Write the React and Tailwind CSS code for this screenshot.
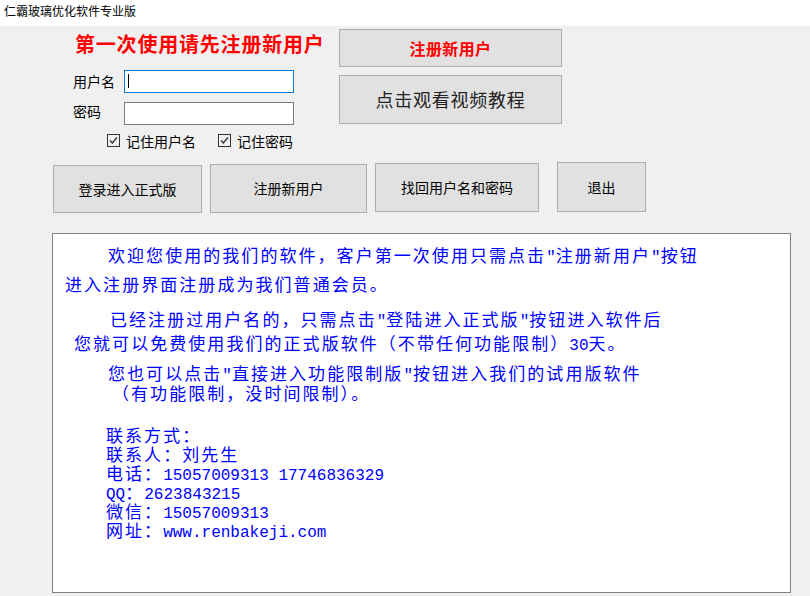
import React from "react";

const L = ({ children }) => (
  <span className="font-['Liberation_Mono',monospace] text-[16px] tracking-normal">{children}</span>
);
const Q = () => <L>{'"'}</L>;

const Check = () => (
  <svg width="13" height="13" viewBox="0 0 13 13" className="shrink-0">
    <rect x="0.5" y="0.5" width="12" height="12" fill="none" stroke="#333" strokeWidth="1" />
    <path d="M3 6.5 L5.3 9 L10 3.5" fill="none" stroke="#333" strokeWidth="1.3" />
  </svg>
);

const Btn = ({ className, children }) => (
  <div
    className={
      "flex items-center justify-center bg-[#e1e1e1] border border-[#adadad] text-[14px] text-black " +
      className
    }
  >
    {children}
  </div>
);

export default function App() {
  return (
    <div className="w-[810px] h-[596px] overflow-hidden bg-[#f0f0f0] font-['Noto_Sans_CJK_SC',sans-serif]">
      {/* title bar */}
      <div className="h-[26px] bg-white pl-[4px] pt-[3px] text-[12px] leading-[16px] text-black">
        仁霸玻璃优化软件专业版
      </div>

      {/* upper section */}
      <div className="h-[136px] flex pl-[73px]">
        <div className="w-[266px] flex flex-col">
          <div className="mt-[6px] ml-[2px] h-[24px] leading-[24px] text-[20px] font-bold text-[#ff0000] tracking-[0.8px] whitespace-nowrap">
            第一次使用请先注册新用户
          </div>
          <div className="mt-[14px] flex items-center h-[23px]">
            <div className="w-[51px] text-[14px] leading-[18px] text-black mb-[1px]">用户名</div>
            <div className="w-[170px] h-[23px] bg-white border border-[#0078d7] pl-[3px] pt-[3px]">
              <div className="w-px h-[14px] bg-black"></div>
            </div>
          </div>
          <div className="mt-[9px] flex items-center h-[23px]">
            <div className="w-[51px] text-[14px] leading-[18px] text-black mb-[6px]">密码</div>
            <div className="w-[170px] h-[23px] bg-white border border-[#7a7a7a]"></div>
          </div>
          <div className="mt-[9px] flex items-center h-[13px] pl-[34px] text-[14px] leading-[18px] text-black whitespace-nowrap">
            <div className="w-[111px] flex items-center gap-[6px]">
              <Check />
              <span>记住用户名</span>
            </div>
            <div className="flex items-center gap-[6px]">
              <Check />
              <span>记住密码</span>
            </div>
          </div>
        </div>
        <div className="flex flex-col">
          <Btn className="mt-[3px] w-[223px] h-[38px]">
            <span className="text-[16px] font-bold text-[#ff0000] tracking-[0.4px]">注册新用户</span>
          </Btn>
          <Btn className="mt-[8px] w-[223px] h-[49px]">
            <span className="text-[18px] text-[#222] tracking-[0.75px]">点击观看视频教程</span>
          </Btn>
        </div>
      </div>

      {/* bottom buttons row */}
      <div className="h-[71px] flex items-start pl-[53px]">
        <Btn className="mt-[3px] w-[149px] h-[48px]">登录进入正式版</Btn>
        <Btn className="ml-[8px] mt-[2px] w-[157px] h-[49px]">注册新用户</Btn>
        <Btn className="ml-[8px] mt-[1px] w-[164px] h-[49px]">找回用户名和密码</Btn>
        <Btn className="ml-[18px] w-[89px] h-[50px]">退出</Btn>
      </div>

      {/* text box */}
      <div className="ml-[52px] w-[739px] h-[360px] bg-white border border-[#828282] text-[#0000ff] text-[17px] tracking-[2.05px] whitespace-nowrap">
        <div className="mt-[11px] h-[19px] leading-[19px] pl-[55px]">
          欢迎您使用的我们的软件，客户第一次使用只需点击<Q />注册新用户<Q />按钮
        </div>
        <div className="mt-[10px] h-[19px] leading-[19px] pl-[12px]">进入注册界面注册成为我们普通会员。</div>
        <div className="mt-[16px] h-[19px] leading-[19px] pl-[57px]">
          已经注册过用户名的，只需点击<Q />登陆进入正式版<Q />按钮进入软件后
        </div>
        <div className="mt-[5px] h-[19px] leading-[19px] pl-[21px]">
          您就可以免费使用我们的正式版软件（不带任何功能限制）<L>30</L>天。
        </div>
        <div className="mt-[11px] h-[19px] leading-[19px] pl-[55px]">
          您也可以点击<Q />直接进入功能限制版<Q />按钮进入我们的试用版软件
        </div>
        <div className="mt-[1px] h-[19px] leading-[19px] pl-[59px]">（有功能限制，没时间限制）。</div>
        <div className="mt-[23px] pl-[53px] flex flex-col">
          <div className="h-[19px] leading-[19px]">联系方式：</div>
          <div className="h-[19px] leading-[19px]">联系人：刘先生</div>
          <div className="h-[19px] leading-[19px]">
            电话：<L>15057009313 17746836329</L>
          </div>
          <div className="h-[19px] leading-[19px]">
            <L>QQ</L>：<L>2623843215</L>
          </div>
          <div className="h-[19px] leading-[19px]">
            微信：<L>15057009313</L>
          </div>
          <div className="h-[19px] leading-[19px]">
            网址：<L>www.renbakeji.com</L>
          </div>
        </div>
      </div>
    </div>
  );
}
